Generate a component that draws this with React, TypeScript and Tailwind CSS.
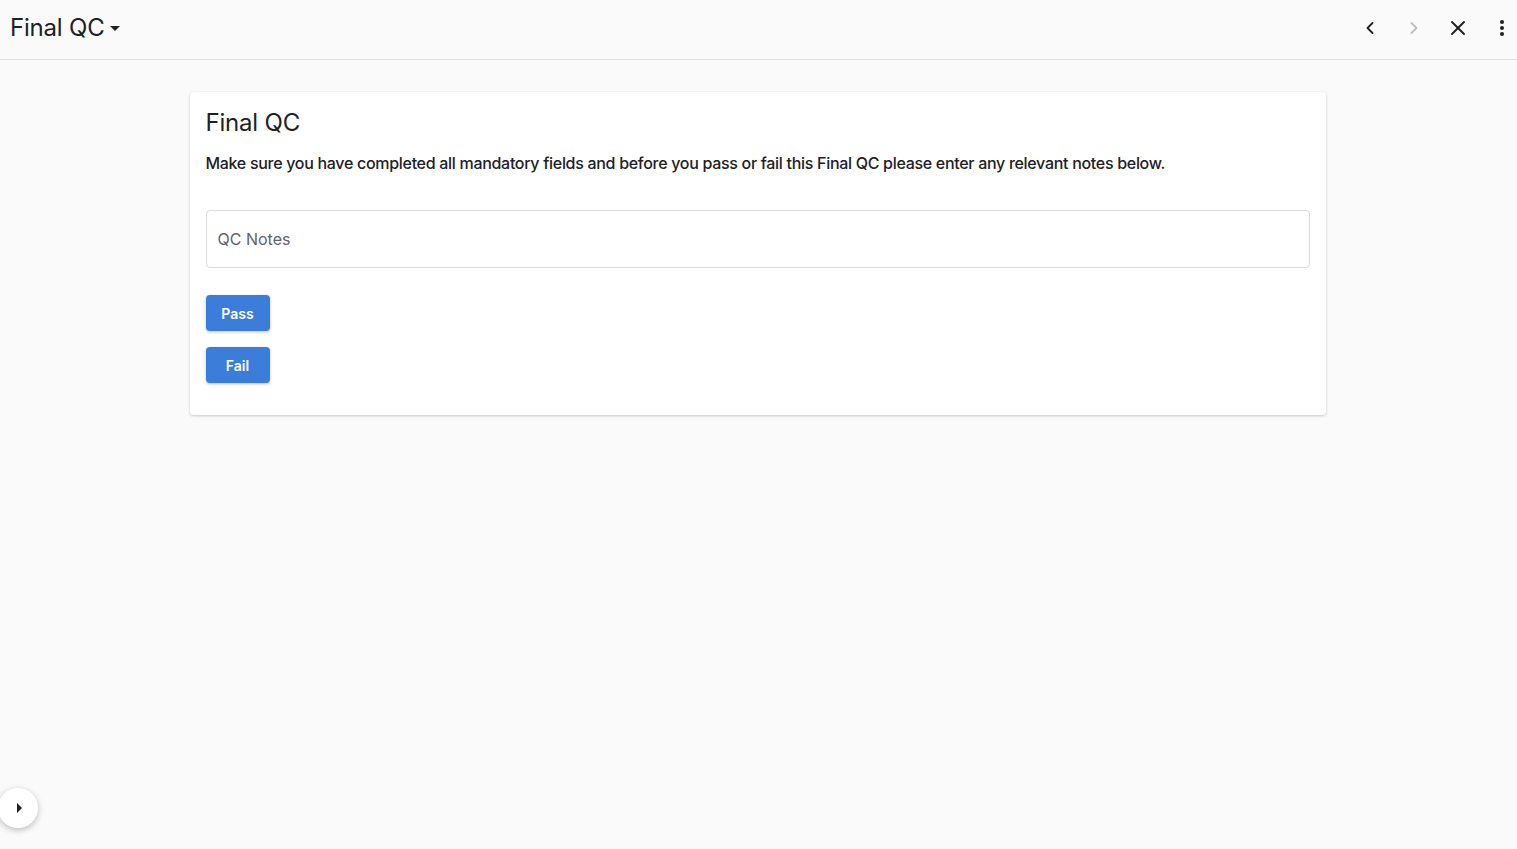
import { ChevronLeft, ChevronRight, X } from 'lucide-react';

export default function App() {
  return (
    <div className="min-h-[849px] bg-[#fafafa] relative font-['Inter',sans-serif] text-[#202124]">
      <header className="h-[60px] flex items-center justify-between border-b border-[#e0e0e0] pl-[10px] pr-[3px] pb-[4px]">
        <button className="flex items-center gap-[6px] text-[24px] tracking-[-0.2px] text-[#202124]">
          Final QC
          <svg width="10" height="5" viewBox="0 0 10 5" className="mt-[2px]"><path d="M0 0h10L5 5z" fill="#202124" /></svg>
        </button>
        <div className="flex items-center gap-[20px]">
          <button aria-label="Previous" className="w-[24px] h-[40px] flex items-center justify-center text-[#202124]"><ChevronLeft size={20} strokeWidth={2.2} /></button>
          <button aria-label="Next" className="w-[24px] h-[40px] flex items-center justify-center text-[#bdbdbd]"><ChevronRight size={20} strokeWidth={2.2} /></button>
          <button aria-label="Close" className="w-[24px] h-[40px] flex items-center justify-center text-[#202124]"><X size={24} strokeWidth={2} /></button>
          <button aria-label="More" className="w-[24px] h-[40px] flex items-center justify-center text-[#202124]">
            <svg width="4" height="16" viewBox="0 0 4 16"><circle cx="2" cy="2" r="2" fill="currentColor" /><circle cx="2" cy="8" r="2" fill="currentColor" /><circle cx="2" cy="14" r="2" fill="currentColor" /></svg>
          </button>
        </div>
      </header>

      <main className="flex justify-center pt-[32px] pr-[2px]">
        <section className="w-[1136px] bg-white rounded-[4px] shadow-[0_1px_3px_rgba(0,0,0,0.2)] px-[16px] pt-[16px] pb-[32px]">
          <h1 className="text-[24px] leading-[30px] tracking-[-0.2px] text-[#202124]">Final QC</h1>
          <p className="mt-[13px] text-[16px] leading-[24px] font-medium text-[#202124] tracking-[-0.3px]">
            Make sure you have completed all mandatory fields and before you pass or fail this Final QC please enter any relevant notes below.
          </p>
          <input
            placeholder="QC Notes"
            className="mt-[35px] w-full h-[58px] rounded-[4px] border border-[#dadce0] px-[11px] text-[16px] placeholder:text-[#5f6368] outline-none"
          />
          <div className="mt-[27px] flex flex-col items-start gap-[16px]">
            <button className="w-[64px] h-[36px] rounded-[4px] bg-[#3b7dd8] text-white text-[14px] font-semibold shadow-[0_1px_3px_rgba(0,0,0,0.25)]">Pass</button>
            <button className="w-[64px] h-[36px] rounded-[4px] bg-[#3b7dd8] text-white text-[14px] font-semibold shadow-[0_1px_3px_rgba(0,0,0,0.25)]">Fail</button>
          </div>
        </section>
      </main>

      <button aria-label="Expand" className="absolute left-[-2px] top-[788px] w-[40px] h-[40px] rounded-full bg-white shadow-[0_2px_6px_rgba(0,0,0,0.25)] flex items-center justify-center">
        <svg width="5" height="10" viewBox="0 0 5 10" className="ml-[2px]"><path d="M0 0l5 5-5 5z" fill="#202124" /></svg>
      </button>
    </div>
  );
}
